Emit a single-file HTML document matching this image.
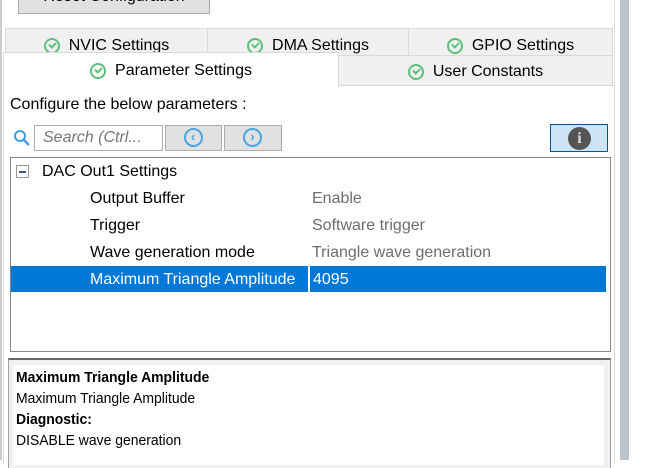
<!DOCTYPE html>
<html><head><style>
*{margin:0;padding:0;box-sizing:border-box}
body{width:655px;height:460px;background:#fff;position:relative;overflow:hidden;font-family:"Liberation Sans",sans-serif;font-size:16px;color:#000}
.a{position:absolute}
.tab{position:absolute;background:#f0f0f0;border:1px solid #d9d9d9;display:flex;align-items:center;justify-content:center;font-size:16px}
.ck{width:16px;height:16px;border:2px solid #5cbf7a;border-radius:50%;margin-right:9px;position:relative}
.ck:after{content:"";position:absolute;left:3px;top:2px;width:5px;height:3px;border-left:2px solid #5cbf7a;border-bottom:2px solid #5cbf7a;transform:rotate(-45deg)}
.btn{position:absolute;background:#e1e1e1;border:1px solid #adadad}
.row{position:absolute;height:26px;line-height:26px}
.nav{position:absolute;left:50%;top:50%;width:19px;height:19px;margin:-10px 0 0 -10px;border:2px solid #4aa6e0;border-radius:50%;color:#4aa6e0;font-size:13px;line-height:14px;text-align:center;font-weight:bold}
</style></head><body>
<div class="a" style="left:0;top:0;width:2px;height:460px;background:#c8ced3"></div>
<div class="btn" style="left:18px;top:-14px;width:192px;height:28px;text-align:center;line-height:20px">Reset Configuration</div>
<div class="a" style="left:620px;top:0;width:9px;height:460px;background:#bcc5cc"></div>
<div class="a" style="left:614px;top:0;width:1px;height:460px;background:#e0e0e0"></div>

<div class="tab" style="left:5px;top:28px;width:203px;height:33px;padding-top:2px"><span class="ck"></span>NVIC Settings</div>
<div class="tab" style="left:207px;top:28px;width:202px;height:33px;padding-top:2px"><span class="ck"></span>DMA Settings</div>
<div class="tab" style="left:408px;top:28px;width:205px;height:33px;padding-top:2px"><span class="ck"></span>GPIO Settings</div>
<div class="tab" style="left:338px;top:55px;width:275px;height:31px;padding-top:3px"><span class="ck"></span>User Constants</div>
<div class="a" style="left:3px;top:85px;width:612px;height:380px;background:#fff;border:1px solid #d9d9d9;border-bottom:none"></div>
<div class="tab" style="left:3px;top:52px;width:336px;height:35px;background:#fff;border-bottom:none;padding-top:1px"><span class="ck"></span>Parameter Settings</div>

<div class="a" style="left:10px;top:96px">Configure the below parameters :</div>
<svg class="a" style="left:13px;top:129px" width="19" height="19"><circle cx="7" cy="7" r="5" fill="none" stroke="#3d9ee0" stroke-width="2"/><line x1="11" y1="11" x2="16" y2="16" stroke="#3d9ee0" stroke-width="2.5"/></svg>
<div class="a" style="left:34px;top:125px;width:129px;height:26px;border:1px solid #adadad;color:#777;font-style:italic;padding-left:8px;line-height:24px">Search (Ctrl...</div>
<div class="btn" style="left:165px;top:125px;width:57px;height:26px"><div class="nav">&lsaquo;</div></div>
<div class="btn" style="left:224px;top:125px;width:58px;height:26px"><div class="nav">&rsaquo;</div></div>
<div class="a" style="left:550px;top:124px;width:58px;height:28px;background:#cce4f7;border:1px solid #005499"><div style="position:absolute;left:17px;top:2px;width:23px;height:23px;border-radius:50%;background:#555;color:#ddd;font-weight:bold;text-align:center;line-height:23px;font-size:16px;font-family:'Liberation Serif',serif">i</div></div>

<div class="a" style="left:10px;top:157px;width:601px;height:195px;border:1px solid #828790"></div>
<div class="a" style="left:16px;top:165px;width:13px;height:13px;border:1px solid #999;background:#fff"><div style="position:absolute;left:2px;top:5px;width:7px;height:2px;background:#3a55a0"></div></div>
<div class="row" style="left:42px;top:159px">DAC Out1 Settings</div>
<div class="row" style="left:90px;top:186px">Output Buffer</div><div class="row" style="left:312px;top:186px;color:#6d6d6d">Enable</div>
<div class="row" style="left:90px;top:213px">Trigger</div><div class="row" style="left:312px;top:213px;color:#6d6d6d">Software trigger</div>
<div class="row" style="left:90px;top:240px">Wave generation mode</div><div class="row" style="left:312px;top:240px;color:#6d6d6d">Triangle wave generation</div>
<div class="a" style="left:11px;top:266px;width:297px;height:26px;background:#0078d7"></div>
<div class="a" style="left:310px;top:266px;width:296px;height:26px;background:#0078d7"></div>
<div class="row" style="left:90px;top:267px;color:#fff">Maximum Triangle Amplitude</div>
<div class="row" style="left:313px;top:267px;color:#fff">4095</div>

<div class="a" style="left:8px;top:358px;width:603px;height:110px;background:#f0f0f0;border-top:2px solid #696969;border-left:1px solid #a0a0a0;border-right:1px solid #a0a0a0"></div>
<div class="a" style="left:13px;top:365px;width:591px;height:100px;background:#fff"></div>
<div class="a" style="left:16px;top:367px;font-size:15px;line-height:21px;transform:scaleX(0.93);transform-origin:0 0">
<b>Maximum Triangle Amplitude</b><br>Maximum Triangle Amplitude<br><b>Diagnostic:</b><br>DISABLE wave generation</div>
</body></html>
